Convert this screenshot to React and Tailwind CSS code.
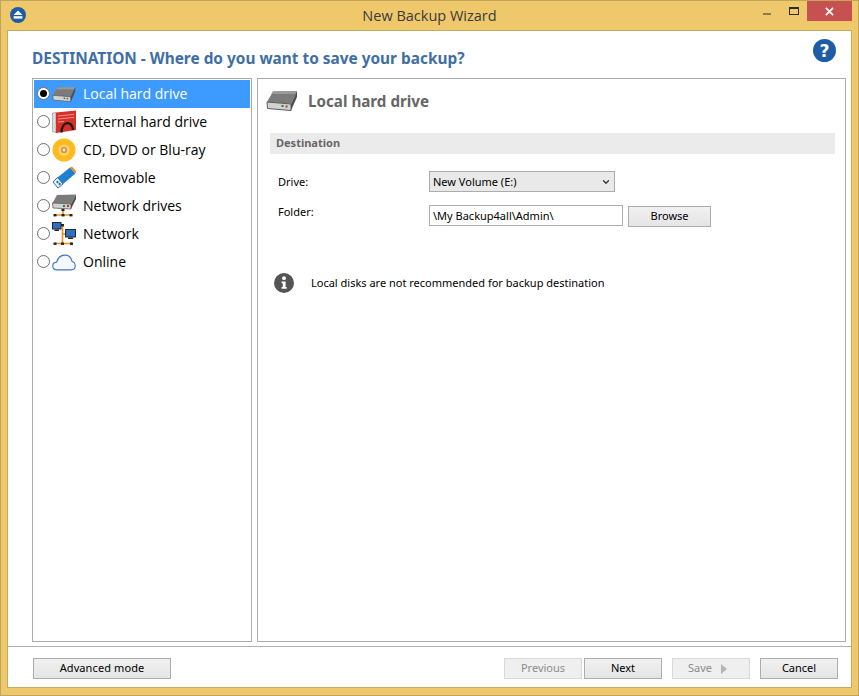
import { ChevronDown } from 'lucide-react'

const UI_FONT = "font-['Noto_Sans',sans-serif]"

function DriveIcon({ className }) {
  return (
    <svg viewBox="0 0 32 22" className={className}>
      <path d="M7 1.5 L31 1 L25 14 L1 12 Z" fill="#7b7b7b" />
      <path d="M7 1.5 L31 1 L29.5 4 L5.5 4 Z" fill="#9a9a9a" />
      <path d="M1 12 L25 14 L25 20.5 L1.5 18.5 Z" fill="#d2d2d2" stroke="#5a5a5a" strokeWidth="1" />
      <path d="M25 14 L31 1 L31 7 L25 20.5 Z" fill="#4f4f4f" />
      <rect x="15.5" y="15" width="2" height="2" fill="#1d8a2d" />
      <rect x="19.5" y="15.5" width="2" height="2" fill="#c8302c" />
    </svg>
  )
}

function ExternalIcon() {
  return (
    <svg viewBox="0 0 24 24" className="h-6 w-6">
      <path d="M0.5 3 L4 2.6 L4 22.5 L0.5 21.5 Z" fill="#dcdcdc" stroke="#8a8a8a" strokeWidth="0.6" />
      <path d="M4 2.6 L24 0.5 L24 20 L4 23 Z" fill="#d92f27" />
      <path d="M6 6 L22 4.4 M6 9 L22 7.4 M6 12 L12 11.4" stroke="#f6b3ad" strokeWidth="0.8" />
      <path d="M9.5 22.5 C9.5 11 20.5 10 21 20" fill="none" stroke="#1a1a1a" strokeWidth="2.4" />
    </svg>
  )
}

function DiscIcon() {
  return (
    <svg viewBox="0 0 24 24" className="h-6 w-6">
      <circle cx="12" cy="12" r="11.5" fill="#fdbb1c" />
      <circle cx="12" cy="12" r="5.5" fill="#fbd98a" />
      <circle cx="12" cy="12" r="3.2" fill="#f58a1f" />
      <circle cx="12" cy="12" r="1.4" fill="#fff" />
    </svg>
  )
}

function UsbIcon() {
  return (
    <svg viewBox="0 0 24 24" className="h-6 w-6">
      <path d="M5.5 11.5 L18 1.5 L23.5 7.5 L11 18 Z" fill="#1f7fd0" />
      <path d="M18 1.5 L20 0.5 L24 5 L23.5 7.5 Z" fill="#f08a1d" />
      <path d="M5.5 11.5 L11 18 L6 22 L1 16 Z" fill="#e8f1f8" stroke="#2a6ea8" strokeWidth="1" />
      <rect x="4.4" y="15" width="2" height="2" fill="#2a6ea8" transform="rotate(40 5.4 16)" />
      <rect x="6.6" y="17" width="2" height="2" fill="#2a6ea8" transform="rotate(40 7.6 18)" />
    </svg>
  )
}

function NetworkDriveIcon() {
  return (
    <svg viewBox="0 0 24 24" className="h-6 w-6">
      <path d="M5 1 L24 0.5 L19 10 L0.5 9 Z" fill="#7b7b7b" />
      <path d="M0.5 9 L19 10 L19 15 L1 14 Z" fill="#d2d2d2" stroke="#5a5a5a" strokeWidth="0.8" />
      <path d="M19 10 L24 0.5 L24 5 L19 15 Z" fill="#4f4f4f" />
      <rect x="11" y="11" width="2" height="2" fill="#1d8a2d" />
      <rect x="15" y="11" width="2" height="2" fill="#c8302c" />
      <path d="M11 15 V21 M3 21 H19" stroke="#f08a1d" strokeWidth="1.6" />
      <rect x="9.5" y="15" width="3" height="2" fill="#222" />
      <rect x="1.5" y="20" width="3" height="2.4" fill="#222" />
      <rect x="9.5" y="20" width="3" height="2.4" fill="#222" />
      <rect x="17.5" y="20" width="3" height="2.4" fill="#222" />
    </svg>
  )
}

function NetworkIcon() {
  return (
    <svg viewBox="0 0 24 24" className="h-6 w-6">
      <path d="M10.5 3 V21.5 M10.5 12 H14 M3 21.5 H20" stroke="#f08a1d" strokeWidth="1.6" fill="none" />
      <rect x="0.5" y="0.5" width="8.5" height="6.5" fill="#2f6fc0" stroke="#1d2b3a" strokeWidth="1" />
      <rect x="2.5" y="7.5" width="4.5" height="1.5" fill="#222" />
      <rect x="13.5" y="7.5" width="10" height="7.5" fill="#2f6fc0" stroke="#1d2b3a" strokeWidth="1" />
      <rect x="16" y="15.5" width="5" height="1.5" fill="#222" />
      <rect x="9" y="2" width="3" height="2.4" fill="#222" />
      <rect x="1.5" y="20.5" width="3" height="2.4" fill="#222" />
      <rect x="9" y="20.5" width="3" height="2.4" fill="#222" />
      <rect x="18" y="20.5" width="3" height="2.4" fill="#222" />
    </svg>
  )
}

function CloudIcon() {
  return (
    <svg viewBox="0 0 26 18" className="h-[17px] w-[24px]">
      <path
        d="M5.5 17 C2.5 17 0.8 15.2 0.8 12.8 C0.8 10.4 2.6 8.8 5 8.6 C6.4 3.8 10 1 14 1 C18.5 1 21 4 21.5 7.6 C23.8 8.4 25.2 10.2 25.2 12.6 C25.2 15.2 23.2 17 20.5 17 Z"
        fill="#f4f7fb"
        stroke="#3f78bd"
        strokeWidth="1.2"
      />
    </svg>
  )
}

const destinos = [
  { nome: 'Local hard drive', icone: <DriveIcon className="h-[17px] w-6" />, ativo: true },
  { nome: 'External hard drive', icone: <ExternalIcon /> },
  { nome: 'CD, DVD or Blu-ray', icone: <DiscIcon /> },
  { nome: 'Removable', icone: <UsbIcon /> },
  { nome: 'Network drives', icone: <NetworkDriveIcon /> },
  { nome: 'Network', icone: <NetworkIcon /> },
  { nome: 'Online', icone: <CloudIcon /> },
]

function DestinoRow({ nome, icone, ativo }) {
  return (
    <div className={`flex h-7 items-center pl-[3px] ${ativo ? 'bg-[#3d9bff] text-white' : 'text-black'}`}>
      <span className="mb-px grid size-[13px] shrink-0 place-items-center rounded-full border border-[#707070] bg-white">
        {ativo && <span className="size-[7px] rounded-full bg-black" />}
      </span>
      <span className="grid w-[26px] shrink-0 place-items-center pl-px">{icone}</span>
      <span className="ml-[7px] pb-[2px] font-['Open_Sans',sans-serif] text-[14px]">{nome}</span>
    </div>
  )
}

function WizardButton({ children, disabled, className = '' }) {
  return (
    <button
      type="button"
      className={`flex h-[21px] items-center justify-center border text-[11px] ${
        disabled
          ? 'border-[#d9d9d9] bg-[#efefef] text-[#8c8c8c]'
          : 'border-[#acacac] bg-gradient-to-b from-[#f0f0f0] to-[#e5e5e5] text-black'
      } ${className}`}
    >
      {children}
    </button>
  )
}

export default function App() {
  return (
    <div className={`flex h-[696px] w-[859px] flex-col overflow-hidden border border-[#c2a55c] bg-[#f0c86c] ${UI_FONT}`}>
      <header className="grid h-[29px] shrink-0 grid-cols-[1fr_auto_1fr]">
        <div className="pl-[9px] pt-[6px]">
          <svg viewBox="0 0 16 16" className="size-4">
            <circle cx="8" cy="8" r="8" fill="#1f5ca6" />
            <path d="M8 3.4 L12.4 8 H3.6 Z" fill="#fff" />
            <rect x="3.6" y="9.2" width="8.8" height="2.4" fill="#fff" />
          </svg>
        </div>
        <h1 className="pt-[5px] font-['Open_Sans',sans-serif] text-[14.5px] leading-5 text-[#3a3a3a]">New Backup Wizard</h1>
        <div className="flex items-start justify-end pr-[6px]">
          <span className="mr-[18px] mt-[12px] h-[2px] w-2 bg-[#8c7a4a]" />
          <span className="mr-[8px] mt-[6px] h-2 w-[10px] border border-t-2 border-[#2b2b2b]" />
          <button type="button" className="grid h-5 w-[45px] place-items-center bg-[#c75050]">
            <svg viewBox="0 0 10 10" className="size-[9px]">
              <path d="M1 1 L9 9 M9 1 L1 9" stroke="#fff" strokeWidth="1.8" />
            </svg>
          </button>
        </div>
      </header>

      <div className="mx-[6px] mb-[7px] flex min-h-0 flex-1 flex-col border border-[#c9ab60] bg-white">
        <main className="flex min-h-0 flex-1 flex-col px-6">
          <div className="-mr-[9px] flex h-[47px] shrink-0 items-start justify-between pt-[8px]">
            <h2 className="mt-[10px] text-[15.4px] font-bold leading-5 text-[#3f6ea6]">
              DESTINATION - Where do you want to save your backup?
            </h2>
            <svg viewBox="0 0 24 24" className="size-[23px]">
              <circle cx="12" cy="12" r="12" fill="#1f5ca6" />
              <text x="12" y="18.5" textAnchor="middle" fill="#fff" fontSize="18" fontWeight="700" fontFamily="DejaVu Sans">?</text>
            </svg>
          </div>

          <div className="-mr-[19px] flex min-h-0 flex-1 gap-[5px]">
            <aside className="w-[220px] shrink-0 border border-[#ababab] p-px">
              {destinos.map(destino => (
                <DestinoRow key={destino.nome} {...destino} />
              ))}
            </aside>

            <section className="min-w-0 flex-1 border border-[#ababab] px-3 pt-[11px]">
              <div className="flex h-[22px] items-center gap-[10px]">
                <DriveIcon className="-ml-[4px] h-[22px] w-8" />
                <h3 className="text-[15.2px] font-bold text-[#666]">Local hard drive</h3>
              </div>

              <div className="-mr-[2px] mt-[21px] flex h-[21px] items-center bg-[#ebebeb] pb-px pl-[6px] text-[11px] font-bold text-[#666]">
                Destination
              </div>

              <div className="mt-[17px] flex h-[21px] items-center pl-2 text-[11px] text-black">
                <span className="w-[151px] pt-[2px]">Drive:</span>
                <div className="relative w-[186px]">
                  <select className="h-[21px] w-full appearance-none border border-[#acacac] bg-[#e9e9e9] pl-[3px] pt-px text-[11px] text-black">
                    <option>New Volume (E:)</option>
                  </select>
                  <ChevronDown className="pointer-events-none absolute right-[4px] top-[6px] size-[10px] text-[#333]" strokeWidth={3} />
                </div>
              </div>

              <div className="mt-[13px] flex h-[21px] items-center pl-2 text-[11px] text-black">
                <span className="w-[151px] pb-[6px]">Folder:</span>
                <input
                  readOnly
                  value="\My Backup4all\Admin\"
                  className="h-[21px] w-[194px] border border-[#abadb3] bg-white pl-[3px] text-[11px] text-black outline-none"
                />
                <WizardButton className="ml-[5px] mt-px h-5 w-[83px]">Browse</WizardButton>
              </div>

              <div className="mt-[47px] flex items-center gap-[17px] pl-[4px] text-[11px] text-black">
                <svg viewBox="0 0 20 20" className="size-5 shrink-0">
                  <circle cx="10" cy="10" r="10" fill="#555" />
                  <circle cx="10" cy="5.2" r="1.9" fill="#fff" />
                  <path d="M7.6 8.4 H11.6 V14 H12.8 V15.8 H7.6 V14 H8.8 V10.2 H7.6 Z" fill="#fff" />
                </svg>
                <span className="pt-px">Local disks are not recommended for backup destination</span>
              </div>
            </section>
          </div>
        </main>

        <footer className="mt-[4px] flex h-[41px] shrink-0 items-start justify-between border-t border-[#b0b0b0] pl-[25px] pr-[13px] pt-[11px]">
          <WizardButton className="w-[138px] pb-px tracking-[0.1px]">Advanced mode</WizardButton>
          <div className="flex">
            <WizardButton disabled className="w-[78px] pb-px">Previous</WizardButton>
            <WizardButton className="ml-[2px] w-[78px] pb-px">Next</WizardButton>
            <WizardButton disabled className="ml-[10px] w-[78px] gap-[9px] pr-[7px]">
              Save
              <span className="h-0 w-0 border-y-[5px] border-l-[6px] border-y-transparent border-l-[#b5b5b5]" />
            </WizardButton>
            <WizardButton className="ml-[10px] w-[78px] pb-px">Cancel</WizardButton>
          </div>
        </footer>
      </div>
    </div>
  )
}
